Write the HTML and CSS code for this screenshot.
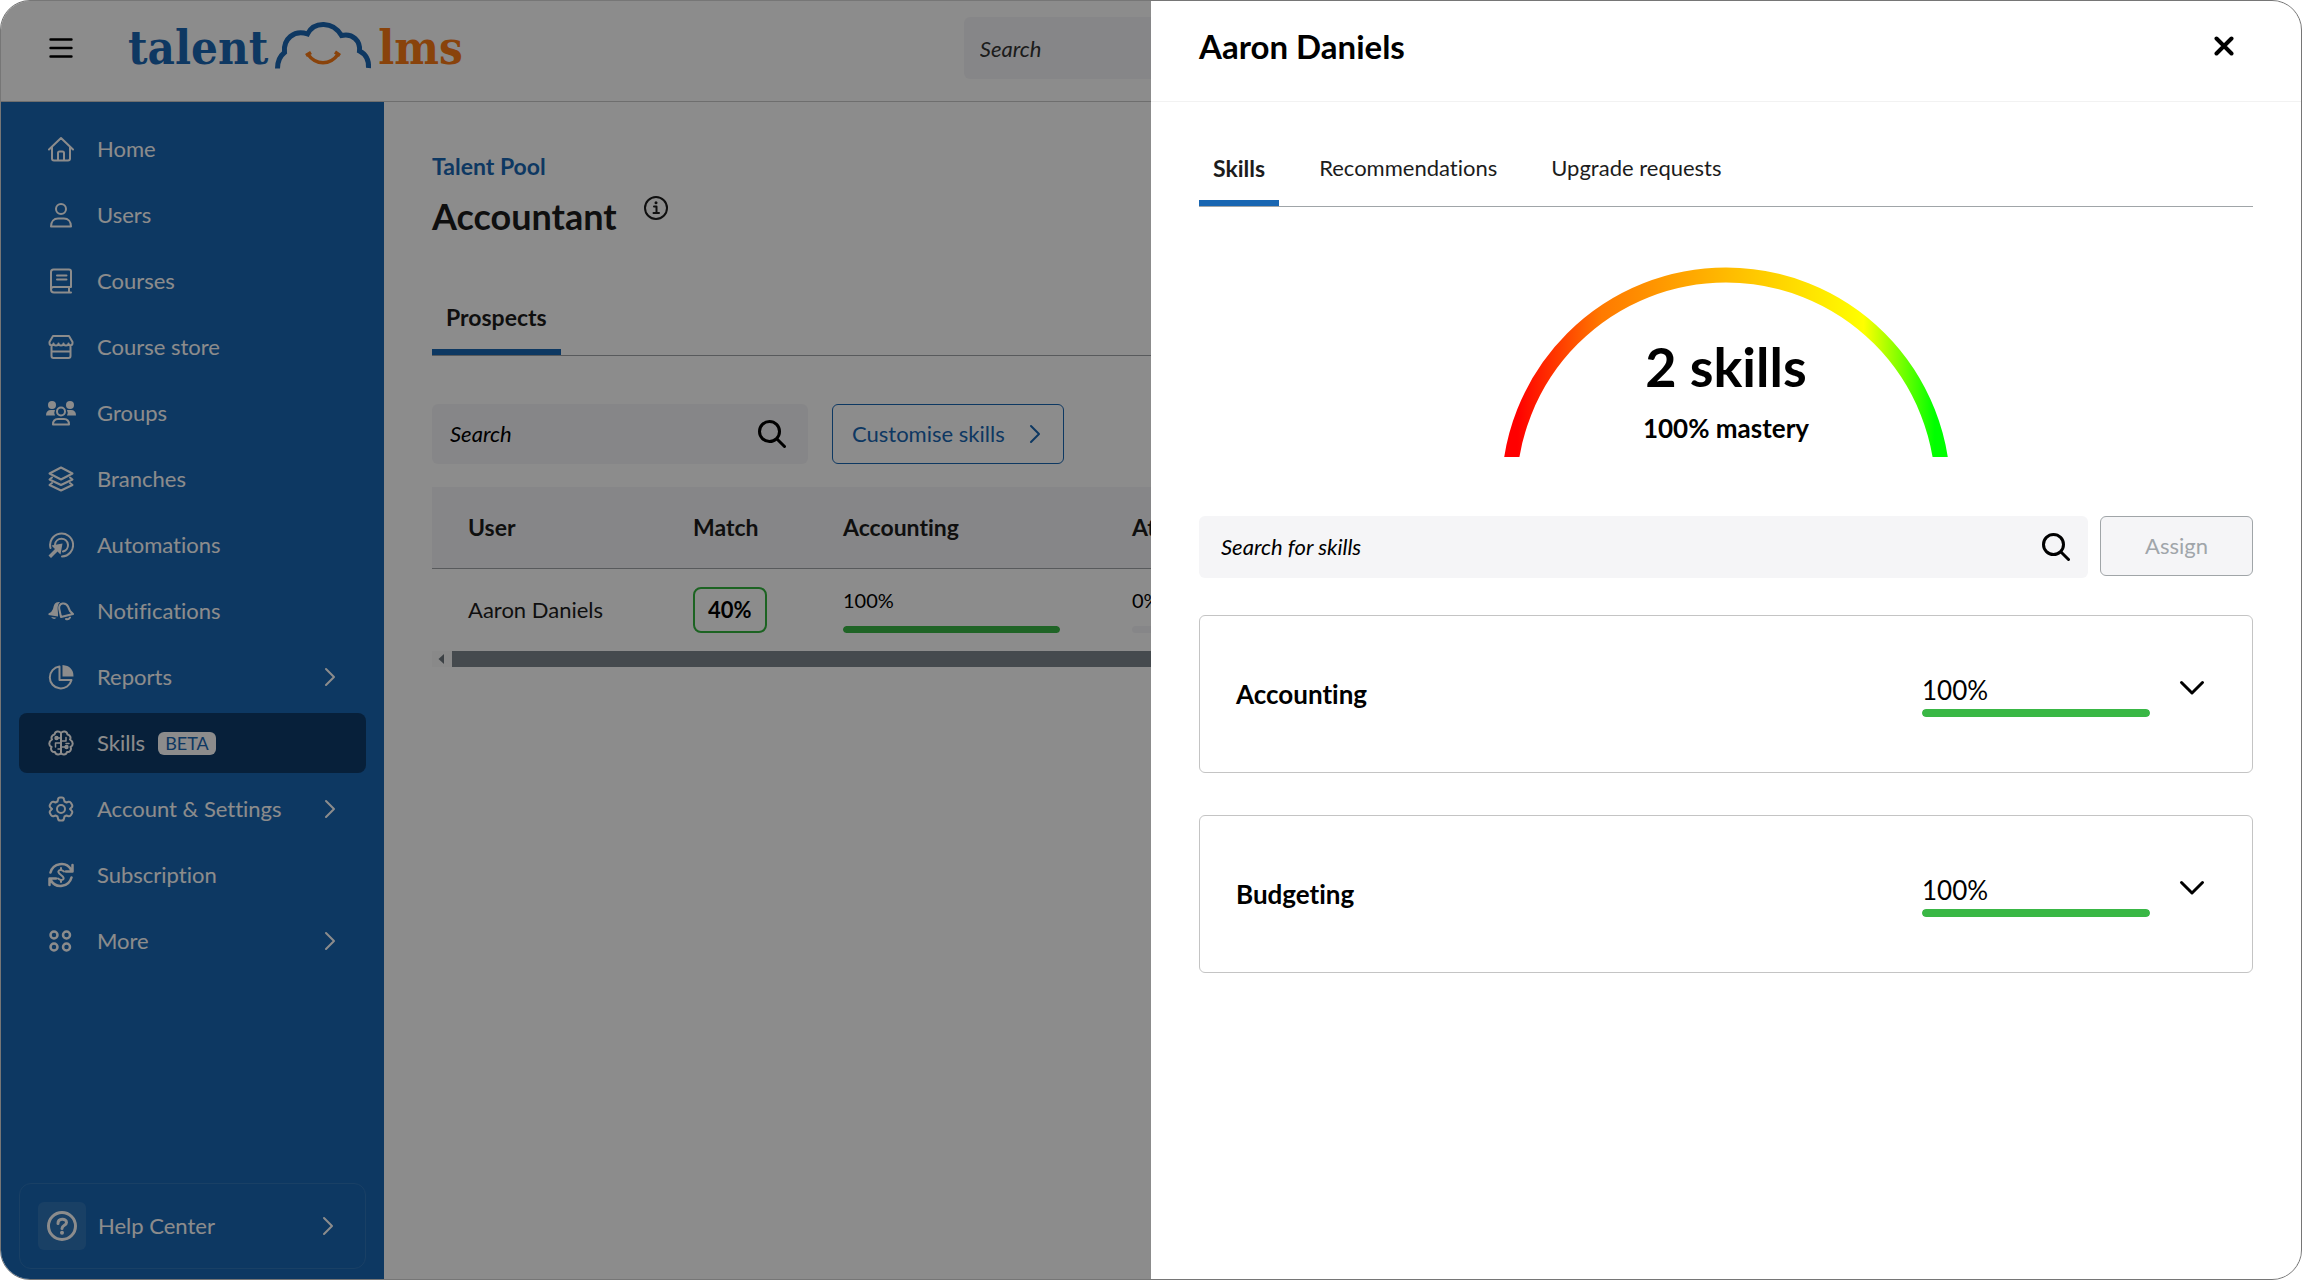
FILE: index.html
```html
<!DOCTYPE html>
<html lang="en">
<head>
    <meta charset="UTF-8">
    <meta name="viewport" content="width=device-width, initial-scale=1.0">
    <title>Talent Pool - Accountant</title>
    <link rel="stylesheet" href="styles.css">
</head>
<body>
    <div class="window">
        <!-- Top bar -->
        <header class="topbar">
            <button class="menu-btn" aria-label="Menu">
                <svg width="24" height="24" viewBox="0 0 24 24"><path d="M1.5 3.5h21M1.5 12h21M1.5 20.5h21" stroke-width="2.4"/></svg>
            </button>
            <a href="#" class="logo">
                <span>talent</span>
                <svg width="98" height="50" viewBox="0 0 98 50">
                    <path d="M3.5 48.5C3.5 41 6 36 10.5 32.5C9 19 20 9.5 33.5 14C40 1 59 1 67.5 15.5C79 13 86.5 21 85.500 31C91.5 34 95 40 94.5 48" stroke-width="5" stroke-linejoin="miter" stroke-linecap="butt"/>
                    <path class="smile" d="M34 34.5C42 45.5 56 45.5 64 34.5M32 35.5l5-3M61 32l5 3.5" stroke-width="3.5" stroke-linecap="butt"/>
                </svg>
                <span class="logo-lms">lms</span>
            </a>
            <input type="search" class="top-search" placeholder="Search" aria-label="Search">
        </header>

        <div class="layout">
            <!-- Sidebar -->
            <nav class="sidebar">
                <a href="#" class="nav-item">
                    <svg class="icon" viewBox="0 0 26 26"><path d="M1 13.5L13 2l12 11.5M4 11v11.5q0 2 2 2h14q2 0 2-2V11M10 24v-7q0-1.5 1.5-1.5h3q1.5 0 1.5 1.5v7"/></svg>
                    <span>Home</span>
                </a>
                <a href="#" class="nav-item">
                    <svg class="icon" viewBox="0 0 26 26"><circle cx="13" cy="7" r="5"/><path d="M3 24.5c0-5 3-8 7-8h6c4 0 7 3 7 8z"/></svg>
                    <span>Users</span>
                </a>
                <a href="#" class="nav-item">
                    <svg class="icon" viewBox="0 0 26 26"><path d="M23 19V3.500q0-2-2-2H5.500q-2.500 0-2.500 2.500v17.500q0 3 3 3h17M23 19H5.500Q3 19 3 21.500M21 19v5.500M9 7.500h9.500M9 11.500h9.500"/></svg>
                    <span>Courses</span>
                </a>
                <a href="#" class="nav-item">
                    <svg class="icon" viewBox="0 0 26 26"><path d="M5 2h16l3.500 6v1c0 3-4 3-4 .5c0 2.500-5 2.500-5 0c0 2.500-5 2.500-5 0c0 2.500-5 2.500-5 0c0 2.500-4 2.500-4-.5V8zM3.500 12.500V22q0 2 2 2h15q2 0 2-2v-9.500M3.500 17.500h19"/></svg>
                    <span>Course store</span>
                </a>
                <a href="#" class="nav-item">
                    <svg class="icon icon-wide" viewBox="0 0 30 26"><g class="fill"><circle cx="6" cy="5" r="4"/><circle cx="24" cy="5" r="4"/><path d="M0 15.500q0-5.500 5-5.500h4q-1.500 3 0 5.500zM30 15.500q0-5.500-5-5.500h-4q1.500 3 0 5.500z"/></g><circle cx="15" cy="11.500" r="4"/><path d="M7 24.500q0-5.500 5-5.500h6q5 0 5 5.500z"/></svg>
                    <span>Groups</span>
                </a>
                <a href="#" class="nav-item">
                    <svg class="icon" viewBox="0 0 26 26"><path d="M13 1.500L24.500 7.500L13 13.500L1.500 7.500zM4 11.500l-2.500 2L13 19l11.500-5.500l-2.500-2M4 17l-2.500 2L13 24.500L24.500 19L22 17"/></svg>
                    <span>Branches</span>
                </a>
                <a href="#" class="nav-item">
                    <svg class="icon" viewBox="0 0 26 26"><path d="M2.500 16A11.500 11.500 0 1 1 14 24.500M7 12.500A6.500 6.500 0 1 1 15 19.500"/><path class="fill" d="M3.500 13.500l11-2l-2 11l-3-3l-6.500 6.500L.5 23.500L7 17z"/></svg>
                    <span>Automations</span>
                </a>
                <a href="#" class="nav-item">
                    <svg class="icon" viewBox="0 0 26 26"><path class="fill" d="M12 4C6.500 3.500 6 7 5 11Q4 14 .5 15.500v1.500l9.500 1.500C10.500 13 8 8 12 4zM3 19l5.500 .8q-2.500 2.500-5.500-.8z"/><path d="M13 19l-1.500-7c-1-4 .5-6 3-6.500c3-.5 4.500 .8 5.500 3l2 4.500l3 3zM18 21q2.500 1 4-1.500"/></svg>
                    <span>Notifications</span>
                </a>
                <a href="#" class="nav-item">
                    <svg class="icon" viewBox="0 0 26 26"><path d="M11.500 2.500A11 11 0 1 0 23.500 16H11.500z"/><path class="fill" d="M14.500 1v11.500h11Q25.500 2 14.500 1z"/></svg>
                    <span>Reports</span>
                    <svg class="chevron" viewBox="0 0 12 20"><path d="M2 2l8 8l-8 8"/></svg>
                </a>
                <a href="#" class="nav-item active">
                    <svg class="icon" viewBox="0 0 26 26"><path d="M13 3C11 .5 7 1 6.500 4.500C3.500 5 3 8 4 9.500C.5 11.500 .5 15.500 3.500 17C2 20 4.500 22.500 7 22C8 25.500 12 25 13 23C14 25 18 25.500 19 22C21.500 22.500 24 20 22.500 17C25.500 15.500 25.500 11.500 22 9.500C23 8 22.500 5 19.500 4.500C19 1 15 .5 13 3zM13 3v20"/><path d="M13 8H9M13 13H7.500v4M13 19h-3M13 11h5V7.500M13 17h5M18 13.500h3" stroke-width="1.5"/><circle cx="8.500" cy="8" r="1.2"/><circle cx="18.500" cy="17" r="1.2"/></svg>
                    <span>Skills</span>
                    <span class="beta">BETA</span>
                </a>
                <a href="#" class="nav-item">
                    <svg class="icon" viewBox="0 0 26 26"><path d="M10 3.500Q10.300 1.500 12 1.500h2Q15.700 1.500 16 3.500L16.500 5.500L18.500 6.500L20.500 5.800Q22 5.300 23 7L24 8.800Q24.800 10.200 23.500 11.500L22 13L23.500 14.500Q24.800 15.800 24 17.200L23 19Q22 20.700 20.500 20.200L18.500 19.500L16.500 20.500L16 22.500Q15.700 24.500 14 24.500H12Q10.300 24.500 10 22.500L9.500 20.500L7.500 19.500L5.500 20.200Q4 20.700 3 19L2 17.200Q1.200 15.800 2.500 14.500L4 13L2.500 11.500Q1.200 10.200 2 8.800L3 7Q4 5.300 5.500 5.800L7.500 6.500L9.500 5.500z"/><circle cx="13" cy="13" r="4"/></svg>
                    <span>Account &amp; Settings</span>
                    <svg class="chevron" viewBox="0 0 12 20"><path d="M2 2l8 8l-8 8"/></svg>
                </a>
                <a href="#" class="nav-item">
                    <svg class="icon" viewBox="0 0 26 26"><path d="M2.500 10.500C5 1 18-1 23 7.500M23.500 15.500C21 25 8 27 3 18.500M24.500 3v6.500H18M1.500 23v-6.500H8" stroke-width="2.5"/><path d="M16 9.500q-3-2.500-5-1T13 13t2 4.500t-5-1M13 6v2M13 18v2"/></svg>
                    <span>Subscription</span>
                </a>
                <a href="#" class="nav-item">
                    <svg class="icon" viewBox="0 0 26 26"><g stroke-width="2.5"><circle cx="6" cy="7" r="3.500"/><circle cx="18.500" cy="7" r="3.500"/><circle cx="6" cy="19" r="3.500"/><circle cx="18.500" cy="19" r="3.500"/></g></svg>
                    <span>More</span>
                    <svg class="chevron" viewBox="0 0 12 20"><path d="M2 2l8 8l-8 8"/></svg>
                </a>

                <a href="#" class="help">
                    <span class="help-icon">
                        <svg width="32" height="32" viewBox="0 0 32 32"><circle cx="16" cy="16" r="13.500"/><path d="M12 13.500c0-5.500 8.500-5.500 8.500-1c0 3-4.500 2.500-4.500 6"/><circle class="fill" cx="16" cy="22.800" r="2"/></svg>
                    </span>
                    <span>Help Center</span>
                    <svg class="chevron" viewBox="0 0 12 20"><path d="M2 2l8 8l-8 8"/></svg>
                </a>
            </nav>

            <!-- Talent pool page -->
            <main class="content">
                <a href="#" class="breadcrumb">Talent Pool</a>
                <div class="page-title">
                    <h1>Accountant</h1>
                    <svg width="26" height="26" viewBox="0 0 26 26"><circle cx="13" cy="13" r="11"/><path d="M11 11.500h2.500V18M10.500 18h5.500"/><circle class="fill" cx="13" cy="7.800" r="1.500"/></svg>
                </div>

                <div class="tabs">
                    <button class="tab active">Prospects</button>
                </div>

                <div class="toolbar">
                    <div class="search-box">
                        <input type="search" placeholder="Search" aria-label="Search users">
                        <svg class="magnifier" viewBox="0 0 28 28"><circle cx="11.500" cy="11.500" r="10"/><path d="M19 19l7.500 7.500"/></svg>
                    </div>
                    <button class="btn-outline">
                        Customise skills
                        <svg class="chevron" viewBox="0 0 12 20"><path d="M2 2l8 8l-8 8"/></svg>
                    </button>
                </div>

                <table class="prospects">
                    <thead>
                        <tr>
                            <th class="col-user">User</th>
                            <th class="col-match">Match</th>
                            <th class="col-skill">Accounting</th>
                            <th>Attention to detail</th>
                        </tr>
                    </thead>
                    <tbody>
                        <tr>
                            <td>Aaron Daniels</td>
                            <td><span class="match">40%</span></td>
                            <td>
                                <div class="score">100%</div>
                                <div class="bar"><div class="bar-fill" style="width: 100%"></div></div>
                            </td>
                            <td>
                                <div class="score">0%</div>
                                <div class="bar"><div class="bar-fill" style="width: 0%"></div></div>
                            </td>
                        </tr>
                    </tbody>
                </table>
                <div class="scrollbar">
                    <svg width="20" height="14" viewBox="0 0 20 14"><path class="fill" d="M12 2v10L6.500 7z"/></svg>
                    <div class="scroll-thumb"></div>
                </div>
            </main>
        </div>

        <div class="overlay"></div>

        <!-- User drawer -->
        <aside class="drawer">
            <div class="drawer-header">
                <h2>Aaron Daniels</h2>
                <button class="close-btn" aria-label="Close">
                    <svg width="20" height="20" viewBox="0 0 20 20"><path d="M2.500 2.500l15 15M17.500 2.500l-15 15" stroke-width="4"/></svg>
                </button>
            </div>

            <div class="drawer-body">
                <div class="tabs">
                    <button class="tab active">Skills</button>
                    <button class="tab">Recommendations</button>
                    <button class="tab">Upgrade requests</button>
                </div>

                <div class="gauge">
                    <svg width="444" height="190" viewBox="0 0 444 190">
                        <defs>
                            <linearGradient id="gaugeColors" gradientUnits="userSpaceOnUse" x1="0" y1="0" x2="444" y2="0">
                                <stop offset="3%" stop-color="#ff0000"/>
                                <stop offset="22%" stop-color="#ff7a00"/>
                                <stop offset="42%" stop-color="#ffa800"/>
                                <stop offset="81%" stop-color="#ffff00"/>
                                <stop offset="97%" stop-color="#00ff00"/>
                            </linearGradient>
                        </defs>
                        <circle class="arc" cx="222" cy="225" r="217" stroke="url(#gaugeColors)"/>
                    </svg>
                    <div class="gauge-text">
                        <strong>2 skills</strong>
                        <span>100% mastery</span>
                    </div>
                </div>

                <div class="skill-search">
                    <div class="search-box">
                        <input type="search" placeholder="Search for skills" aria-label="Search for skills">
                        <svg class="magnifier" viewBox="0 0 28 28"><circle cx="11.500" cy="11.500" r="10"/><path d="M19 19l7.500 7.500"/></svg>
                    </div>
                    <button class="btn-assign" disabled>Assign</button>
                </div>

                <div class="skill-card">
                    <h3>Accounting</h3>
                    <div class="skill-score">
                        <div>100%</div>
                        <div class="bar"><div class="bar-fill" style="width: 100%"></div></div>
                    </div>
                    <button class="expand-btn" aria-label="Expand Accounting">
                        <svg width="26" height="16" viewBox="0 0 26 16"><path d="M2.500 2.500L13 13L23.500 2.500" stroke-width="3"/></svg>
                    </button>
                </div>

                <div class="skill-card">
                    <h3>Budgeting</h3>
                    <div class="skill-score">
                        <div>100%</div>
                        <div class="bar"><div class="bar-fill" style="width: 100%"></div></div>
                    </div>
                    <button class="expand-btn" aria-label="Expand Budgeting">
                        <svg width="26" height="16" viewBox="0 0 26 16"><path d="M2.500 2.500L13 13L23.500 2.500" stroke-width="3"/></svg>
                    </button>
                </div>
            </div>
        </aside>
    </div>
</body>
</html>
```

FILE: styles.css
```css
/* General */
* {
    box-sizing: border-box;
}

body {
    margin: 0;
    background-color: #fff;
    color: #1c1c1c;
    font-family: Lato, "Open Sans", sans-serif;
    font-size: 22px;
    line-height: 28px;
    font-variant-ligatures: none;
}

h1, h2, h3 {
    margin: 0;
    font-weight: bold;
}

a {
    color: inherit;
    text-decoration: none;
}

button, input {
    font: inherit;
    color: inherit;
    font-variant-ligatures: none;
}

button {
    background: none;
    border: none;
    padding: 0;
    cursor: pointer;
}

input::placeholder {
    color: #000;
    font-style: italic;
    opacity: 1;
}

svg {
    display: block;
    flex-shrink: 0;
    fill: none;
    stroke: currentColor;
    stroke-width: 2;
    stroke-linecap: round;
    stroke-linejoin: round;
}

.fill {
    fill: currentColor;
    stroke: none;
}

.window {
    position: relative;
    display: flex;
    flex-direction: column;
    min-height: 100vh;
    border: 1px solid #767676;
    border-radius: 30px;
    overflow: hidden;
}

/* Top bar */
.topbar {
    display: flex;
    align-items: center;
    height: 101px;
    padding-left: 48px;
    padding-bottom: 6px;
    border-bottom: 1px solid #c8c8c8;
}

.menu-btn {
    color: #000;
}

.logo {
    display: flex;
    gap: 6px;
    margin-left: 55px;
    color: #1a66b3;
    font-family: "DejaVu Serif Condensed", "DejaVu Serif", serif;
    font-size: 47px;
    font-weight: bold;
    line-height: 56px;
}

.logo-lms, .smile {
    color: #fa7a15;
}

.top-search {
    width: 380px;
    height: 62px;
    margin-left: 501px;
    padding: 0 16px;
    background-color: #f5f5f7;
    border: none;
    border-radius: 6px;
}

.top-search::placeholder {
    color: #333;
}

.layout {
    flex: 1;
    display: flex;
}

/* Sidebar */
.sidebar {
    display: flex;
    flex-direction: column;
    gap: 6px;
    width: 383px;
    flex-shrink: 0;
    padding: 17px 18px 10px;
    background-color: #1966b2;
    color: #fff;
}

.nav-item {
    display: flex;
    align-items: center;
    height: 60px;
    padding: 0 30px 0 29px;
    border-radius: 8px;
}

.nav-item.active {
    background-color: #0e3b6a;
}

.icon {
    width: 26px;
    height: 26px;
    margin-right: 23px;
}

.icon-wide {
    width: 30px;
    margin: 0 21px 0 -2px;
}

.chevron {
    width: 12px;
    height: 20px;
    margin-left: auto;
}

.beta {
    margin-left: 13px;
    padding: 0 7px;
    background-color: #fff;
    border-radius: 6px;
    color: #1966b2;
    font-size: 18px;
    line-height: 23px;
}

.help {
    display: flex;
    align-items: center;
    height: 86px;
    margin-top: auto;
    padding: 0 31px 0 18px;
    border: 1px solid #2e75b9;
    border-radius: 12px;
}

.help-icon {
    display: flex;
    align-items: center;
    justify-content: center;
    width: 48px;
    height: 48px;
    margin-right: 12px;
    background-color: #2e75b9;
    border-radius: 6px;
}

.help-icon svg {
    stroke-width: 3;
}

/* Talent pool page */
.content {
    flex: 1;
    min-width: 0;
    padding: 50px 48px;
}

.breadcrumb {
    color: #1966b2;
    font-size: 23px;
    font-weight: bold;
}

.page-title {
    display: flex;
    gap: 26px;
    margin-top: 14px;
}

h1 {
    font-size: 36px;
    line-height: 42px;
}

.tabs {
    display: flex;
    gap: 26px;
    border-bottom: 1px solid #a0a5a8;
}

.content .tabs {
    margin-top: 50px;
}

.tab {
    height: 68px;
    padding: 0 14px;
    padding-bottom: 2px;
    border-bottom: 6px solid transparent;
}

.tab.active {
    border-bottom-color: #1966b2;
    font-size: 23px;
    font-weight: bold;
}

.toolbar {
    display: flex;
    gap: 24px;
    margin-top: 48px;
}

.search-box {
    display: flex;
    align-items: center;
    height: 60px;
    padding: 0 18px;
    background-color: #f5f5f7;
    border-radius: 6px;
    color: #000;
}

.search-box input {
    flex: 1;
    min-width: 0;
    padding: 0;
    background: none;
    border: none;
}

.toolbar .search-box {
    width: 376px;
    padding-right: 22px;
}

.magnifier {
    width: 28px;
    height: 28px;
    stroke-width: 3;
}

.btn-outline {
    display: flex;
    align-items: center;
    gap: 24px;
    height: 60px;
    padding: 0 22px 0 19px;
    border: 1px solid #1966b2;
    border-radius: 6px;
    color: #1966b2;
}

/* Prospects table */
.prospects {
    width: 100%;
    margin-top: 23px;
    border-collapse: collapse;
    table-layout: fixed;
}

.prospects th {
    height: 81px;
    padding: 0 0 0 36px;
    background-color: #f5f5f7;
    border-bottom: 1px solid #a0a5a8;
    font-size: 23px;
    text-align: left;
}

.prospects td {
    height: 83px;
    padding: 0 36px;
}

.col-user {
    width: 225px;
}

.col-match {
    width: 150px;
}

.col-skill {
    width: 289px;
}

.prospects td:nth-child(2) {
    padding-right: 0;
}

.match {
    display: inline-block;
    padding: 7px 13px;
    border: 2px solid #34b53f;
    border-radius: 8px;
    color: #000;
    font-weight: bold;
}

.score {
    font-size: 20px;
    color: #000;
}

.bar {
    height: 7px;
    background-color: #f5f5f7;
    border-radius: 4px;
    overflow: hidden;
}

.bar-fill {
    height: 100%;
    background-color: #39b745;
    border-radius: 4px;
}

.score + .bar {
    margin-top: 12px;
}

.scrollbar {
    display: flex;
    align-items: center;
    height: 16px;
    background-color: #fafafa;
    color: #6e777e;
}

.scroll-thumb {
    flex: 1;
    height: 16px;
    background-color: #7f888f;
}

/* Dimming layer */
.overlay {
    position: absolute;
    inset: 0;
    background-color: rgba(0, 0, 0, 0.45);
}

/* User drawer */
.drawer {
    position: absolute;
    top: 0;
    right: 0;
    bottom: 0;
    width: 50%;
    background-color: #fff;
}

.drawer-header {
    display: flex;
    align-items: center;
    justify-content: space-between;
    height: 101px;
    padding: 0 67px 10px 48px;
    border-bottom: 1px solid #f2f2f2;
    color: #000;
}

h2 {
    font-size: 33px;
    line-height: 40px;
}

.drawer-body {
    padding: 36px 48px;
}

.gauge {
    display: grid;
    justify-content: center;
    margin-top: 60px;
}

.gauge svg, .gauge-text {
    grid-area: 1 / 1;
}

.arc {
    stroke-width: 15;
}

.gauge-text {
    display: flex;
    flex-direction: column;
    align-items: center;
    justify-content: flex-end;
    padding-bottom: 15px;
    color: #000;
}

.gauge-text strong {
    font-size: 54px;
    line-height: 64px;
}

.gauge-text span {
    margin-top: 15px;
    font-size: 26px;
    font-weight: bold;
}

.skill-search {
    display: flex;
    gap: 12px;
    margin-top: 59px;
    margin-bottom: 37px;
}

.skill-search .search-box {
    flex: 1;
    height: 62px;
    padding: 0 18px 0 22px;
}

.btn-assign {
    width: 153px;
    height: 60px;
    background-color: #f5f5f7;
    border: 1px solid #a0a5a8;
    border-radius: 6px;
    color: #a0a5aa;
}

.skill-card {
    display: flex;
    align-items: center;
    height: 158px;
    margin-bottom: 42px;
    padding: 0 47px 0 36px;
    border: 1px solid #c4c4c4;
    border-radius: 6px;
    color: #000;
    font-size: 26px;
}

h3 {
    flex: 1;
    font-size: 26px;
}

.skill-score {
    width: 228px;
    margin-right: 29px;
    padding-top: 4px;
}

.skill-score .bar {
    height: 8px;
    margin-top: 5px;
}

.expand-btn {
    padding-bottom: 12px;
}
```
